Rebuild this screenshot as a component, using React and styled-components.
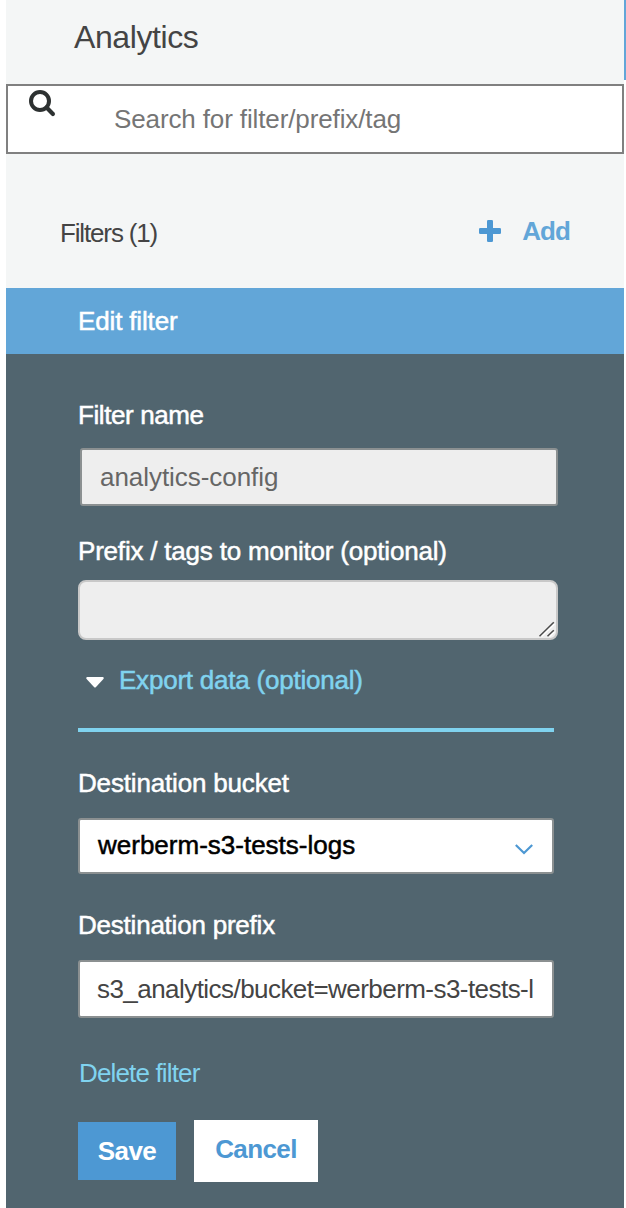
import React from 'react';
import styled, { createGlobalStyle } from 'styled-components';

const GlobalStyle = createGlobalStyle`
  * { box-sizing: border-box; }
  body {
    margin: 0;
    background: #fff;
    font-family: "Liberation Sans", Arial, Helvetica, sans-serif;
    overflow: hidden;
  }
  svg { display: block; flex-shrink: 0; }
`;

const Text = styled.span`
  display: block;
  margin: 0;
  font-size: ${(p) => p.$size || 26}px;
  line-height: ${(p) => (p.$size || 26) + 4}px;
  font-weight: ${(p) => (p.$bold ? 700 : 400)};
  letter-spacing: ${(p) => p.$track || 0}px;
  color: ${(p) => p.$color || '#444'};
  white-space: nowrap;
  -webkit-text-stroke: ${(p) => (p.$medium ? '0.5px currentColor' : '0')};
`;

const Page = styled.div`
  display: flex;
  width: 626px;
  height: 1208px;
  padding-left: 6px;
`;

const Sidebar = styled.main`
  display: flex;
  flex-direction: column;
  width: 618px;
  background: #f4f6f6;
`;

const EdgeMarker = styled.div`
  width: 2px;
  height: 80px;
  background: #62a6d8;
`;

const Header = styled.header`
  height: 84px;
  padding: 19px 0 0 68px;
`;

const SearchBox = styled.div`
  display: flex;
  align-items: flex-start;
  height: 70px;
  border: 2px solid #808080;
  background: #fff;
  padding: 4px 0 0 21px;
`;

const SearchLabel = styled.div`
  padding: 14px 0 0 58px;
`;

const FilterBar = styled.div`
  display: flex;
  align-items: flex-start;
  justify-content: space-between;
  height: 134px;
  padding: 62px 54px 0 54px;
`;

const FilterCount = styled.div`
  padding-top: 2px;
`;

const AddButton = styled.div`
  display: flex;
  align-items: flex-start;
  gap: 21px;

  svg { margin-top: 4px; }
`;

const Banner = styled.div`
  height: 66px;
  padding: 18px 0 0 72px;
  background: #62a6d8;
`;

const Form = styled.section`
  display: flex;
  flex-direction: column;
  flex: 1;
  padding: 46px 66px 0 72px;
  background: #51656f;
`;

const Label = styled(Text).attrs({ as: 'label', $medium: true, $color: '#fff' })``;

const TextField = styled.div`
  width: ${(p) => (p.$disabled ? 478 : 476)}px;
  height: 58px;
  margin: ${(p) => (p.$disabled ? '18px 0 30px 2px' : '20px 0 40px')};
  padding: 12px 18px 0 ${(p) => (p.$disabled ? 18 : 17)}px;
  border: 2px solid #8b9091;
  border-radius: 3px;
  background: ${(p) => (p.$disabled ? '#eeeeee' : '#fff')};
  overflow: hidden;
`;

const TextArea = styled.div`
  display: flex;
  align-items: flex-end;
  justify-content: flex-end;
  height: 60px;
  margin-top: 14px;
  border: 2px solid #c8c8c8;
  border-radius: 8px;
  background: #eeeeee;
`;

const Select = styled.div`
  display: flex;
  align-items: flex-start;
  justify-content: space-between;
  width: 476px;
  height: 56px;
  margin: 20px 0 36px;
  padding: 10px 19px 0 18px;
  border: 2px solid #8b9091;
  border-radius: 3px;
  background: #fff;

  svg { margin-top: 14px; }
`;

const ExportToggle = styled.div`
  display: flex;
  align-items: flex-start;
  gap: 15px;
  width: 476px;
  height: 67px;
  margin: 25px 0 36px;
  padding-left: 8px;
  border-bottom: 4px solid #80d3ef;

  svg { margin-top: 12px; }
`;

const DeleteLink = styled(Text)`
  margin-left: 1px;
`;

const Actions = styled.div`
  display: flex;
  align-items: flex-start;
  gap: 18px;
  margin-top: 32px;
`;

const Button = styled.div`
  display: flex;
  justify-content: center;
  width: ${(p) => (p.$primary ? 98 : 124)}px;
  height: ${(p) => (p.$primary ? 58 : 62)}px;
  margin-top: ${(p) => (p.$primary ? 2 : 0)}px;
  padding-top: 14px;
  background: ${(p) => (p.$primary ? '#4d98d3' : '#fff')};
`;

const SearchIcon = () => (
  <svg width="27" height="27" viewBox="0 0 27 27" fill="none" stroke="#2d3131">
    <circle cx="11" cy="11" r="9" strokeWidth="4" />
    <path d="M17.6 17.6 L23.9 23.9" strokeWidth="4.2" strokeLinecap="round" />
  </svg>
);

const PlusIcon = () => (
  <svg width="22" height="22" viewBox="0 0 22 22" fill="#4d98d3">
    <rect x="8" y="0" width="6" height="22" rx="1.3" />
    <rect x="0" y="8" width="22" height="6" rx="1.3" />
  </svg>
);

const CaretIcon = () => (
  <svg width="18" height="11" viewBox="0 0 18 11" fill="#fff">
    <path d="M1 0 H17 Q18.3 .6 17.4 2 L10 10 Q9 11 8 10 L.6 2 Q-.3 .6 1 0 Z" />
  </svg>
);

const ChevronIcon = () => (
  <svg width="18" height="11" viewBox="0 0 18 11" fill="none" stroke="#4d98d3" strokeWidth="2.2">
    <path d="M.8 1 L9 9 L17.2 1" />
  </svg>
);

const ResizeGrip = () => (
  <svg width="19" height="19" viewBox="0 0 19 19" fill="none" strokeWidth="1.5">
    <path d="M4.5 17.5 L17.5 5 M12.5 17.5 L17.5 12.8" stroke="#fff" />
    <path d="M2.5 17.3 L16.8 3.2 M10.5 17.3 L16.8 11.2" stroke="#4c4c4c" />
  </svg>
);

export default function App() {
  return (
    <>
      <GlobalStyle />
      <Page>
        <Sidebar>
          <Header>
            <Text as="h1" $size={32} $track={-0.4}>Analytics</Text>
          </Header>
          <SearchBox>
            <SearchIcon />
            <SearchLabel>
              <Text $track={-0.12} $color="#757575">Search for filter/prefix/tag</Text>
            </SearchLabel>
          </SearchBox>
          <FilterBar>
            <FilterCount>
              <Text $track={-1.15}>Filters (1)</Text>
            </FilterCount>
            <AddButton>
              <PlusIcon />
              <Text $bold $track={-0.9} $color="#62a6d8">Add</Text>
            </AddButton>
          </FilterBar>
          <Banner>
            <Text $medium $track={-0.15} $color="#fff">Edit filter</Text>
          </Banner>
          <Form>
            <Label $track={-0.4}>Filter name</Label>
            <TextField $disabled>
              <Text $track={-0.05} $color="#666">analytics-config</Text>
            </TextField>
            <Label $track={-0.2}>Prefix / tags to monitor (optional)</Label>
            <TextArea>
              <ResizeGrip />
            </TextArea>
            <ExportToggle>
              <CaretIcon />
              <Text $track={-0.22} $color="#80d3ef" $medium>Export data (optional)</Text>
            </ExportToggle>
            <Label $track={-0.17}>Destination bucket</Label>
            <Select>
              <Text $color="#000" $medium>werberm-s3-tests-logs</Text>
              <ChevronIcon />
            </Select>
            <Label $track={-0.22}>Destination prefix</Label>
            <TextField>
              <Text $track={-0.55}>s3_analytics/bucket=werberm-s3-tests-l</Text>
            </TextField>
            <DeleteLink $track={-0.85} $color="#80d3ef">Delete filter</DeleteLink>
            <Actions>
              <Button $primary>
                <Text $bold $track={-0.6} $color="#fff">Save</Text>
              </Button>
              <Button>
                <Text $bold $track={-0.6} $color="#4d98d3">Cancel</Text>
              </Button>
            </Actions>
          </Form>
        </Sidebar>
        <EdgeMarker />
      </Page>
    </>
  );
}
